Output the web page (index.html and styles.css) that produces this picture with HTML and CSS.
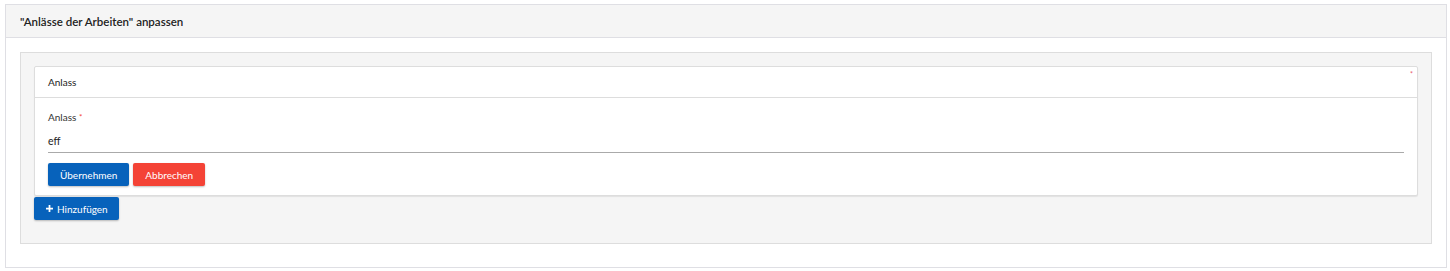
FILE: index.html
```html
<!DOCTYPE html>
<html lang="de">
<head>
<meta charset="utf-8">
<title>Anlässe der Arbeiten anpassen</title>
<link rel="stylesheet" href="styles.css">
</head>
<body>
<div class="panel">
  <div class="panel-heading">"Anlässe der Arbeiten" anpassen</div>
  <div class="panel-body">
    <div class="well">
      <div class="card">
        <div class="card-heading"><span>Anlass</span><span class="req-mark">*</span></div>
        <div class="card-body">
          <label class="field-label">Anlass <span class="req">*</span></label>
          <div class="input">eff</div>
          <div class="actions">
            <button class="btn btn-primary">Übernehmen</button>
            <button class="btn btn-danger">Abbrechen</button>
          </div>
        </div>
      </div>
      <button class="btn btn-primary btn-add"><svg class="plus" viewBox="0 0 8 8" width="7" height="7"><path d="M3 0h2v3h3v2H5v3H3V5H0V3h3z" fill="#fff"/></svg>Hinzufügen</button>
    </div>
  </div>
</div>
</body>
</html>
```
FILE: styles.css
```css
html, body {
  margin: 0;
  padding: 0;
  background: #fff;
}
body {
  font-family: Lato, "Open Sans", "Liberation Sans", sans-serif;
  font-size: 11px;
  color: #222;
  padding: 4px 3px 0 5px;
}
.panel {
  border: 1px solid #dfdfe4;
  height: 264px;
  box-sizing: border-box;
}
.panel-heading {
  height: 32px;
  background: #f5f5f5;
  border-bottom: 1px solid #dfdfe4;
  padding: 0 14px;
  display: flex;
  align-items: center;
  font-size: 11.5px;
  font-weight: 600;
  color: #222;
}
.panel-body {
  padding: 14px 14px 0 14px;
}
.well {
  background: #f5f5f5;
  border: 1px solid #ddd;
  padding: 13px 13px 23px 13px;
}
.card {
  background: #fff;
  border: 1px solid #ddd;
  border-radius: 2px;
  box-shadow: 0 1px 1px rgba(0,0,0,0.08);
}
.card-heading {
  height: 30px;
  border-bottom: 1px solid #ddd;
  padding: 0 4px 0 13px;
  display: flex;
  justify-content: space-between;
  align-items: center;
  font-size: 10px;
  color: #222;
}
.req-mark {
  color: #e8566a;
  font-size: 7px;
  align-self: flex-start;
  margin-top: 3px;
}
.card-body {
  padding: 12px 13px 9px 13px;
}
.field-label {
  display: block;
  font-size: 10px;
  line-height: 14px;
  color: #333;
}
.req {
  color: #f44336;
  font-size: 8px;
  vertical-align: top;
}
.input {
  height: 22px;
  line-height: 22px;
  margin-top: 6px;
  border-bottom: 1px solid #aaa;
  font-size: 10.5px;
  color: #222;
}
.actions {
  margin-top: 10px;
  display: flex;
  gap: 4px;
}
.btn {
  font-family: inherit;
  font-size: 10px;
  height: 23px;
  padding: 0 12px;
  border: none;
  border-radius: 2px;
  color: #fff;
  cursor: pointer;
  box-shadow: 0 1px 2px rgba(0,0,0,0.25);
  display: inline-flex;
  align-items: center;
  gap: 4px;
}
.btn-primary {
  background: #0762bb;
}
.btn-danger {
  background: #f44336;
}
.btn-add {
  margin-top: 1px;
  padding: 0 11px 0 12px;
}
.plus {
  display: block;
}
```
